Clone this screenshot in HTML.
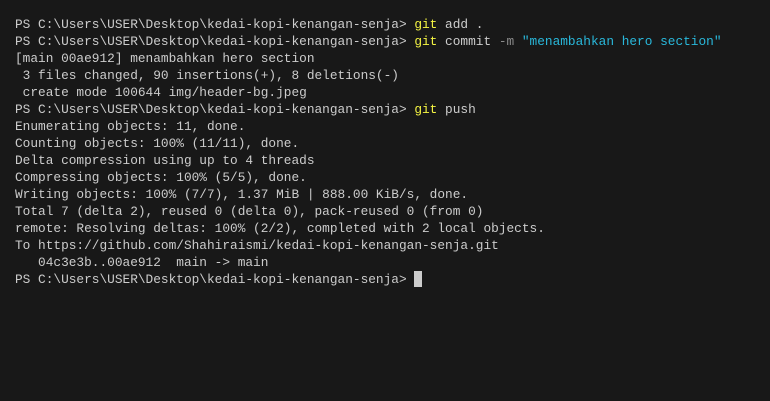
<!DOCTYPE html>
<html><head><style>
html,body{margin:0;padding:0;background:#181818;width:770px;height:401px;overflow:hidden}
pre{margin:0;position:absolute;left:15px;top:16px;font-family:"Liberation Mono",monospace;font-size:12.8px;line-height:17px;color:#cccccc}
.y{color:#f5f543}.g{color:#8a8a8a}.c{color:#29b8db}
.cur{display:inline-block;width:8px;height:16px;background:#cccccc;vertical-align:top;margin-top:0px}
</style></head><body><pre>PS C:\Users\USER\Desktop\kedai-kopi-kenangan-senja&gt; <span class="y">git</span> add .
PS C:\Users\USER\Desktop\kedai-kopi-kenangan-senja&gt; <span class="y">git</span> commit <span class="g">-m</span> <span class="c">"menambahkan hero section"</span>
[main 00ae912] menambahkan hero section
 3 files changed, 90 insertions(+), 8 deletions(-)
 create mode 100644 img/header-bg.jpeg
PS C:\Users\USER\Desktop\kedai-kopi-kenangan-senja&gt; <span class="y">git</span> push
Enumerating objects: 11, done.
Counting objects: 100% (11/11), done.
Delta compression using up to 4 threads
Compressing objects: 100% (5/5), done.
Writing objects: 100% (7/7), 1.37 MiB | 888.00 KiB/s, done.
Total 7 (delta 2), reused 0 (delta 0), pack-reused 0 (from 0)
remote: Resolving deltas: 100% (2/2), completed with 2 local objects.
To https://github.com/Shahiraismi/kedai-kopi-kenangan-senja.git
   04c3e3b..00ae912  main -&gt; main
PS C:\Users\USER\Desktop\kedai-kopi-kenangan-senja&gt; <span class="cur"></span></pre></body></html>
